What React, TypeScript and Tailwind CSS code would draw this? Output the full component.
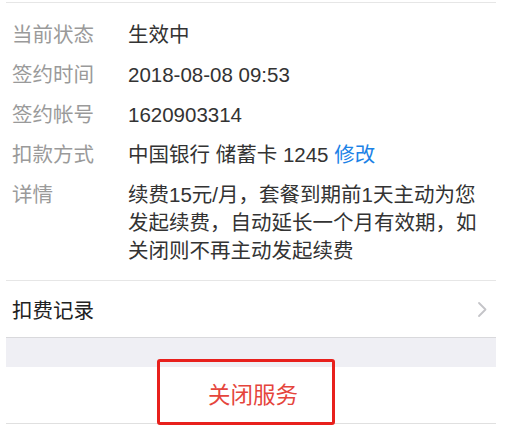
const rows: { label: string; value: React.ReactNode }[] = [
  { label: "当前状态", value: "生效中" },
  { label: "签约时间", value: "2018-08-08 09:53" },
  { label: "签约帐号", value: "1620903314" },
  {
    label: "扣款方式",
    value: (
      <>
        中国银行 储蓄卡 1245 <span className="text-[#1b82e6]">修改</span>
      </>
    ),
  },
  {
    label: "详情",
    value: "续费15元/月，套餐到期前1天主动为您发起续费，自动延长一个月有效期，如关闭则不再主动发起续费",
  },
];

const Chevron = () => (
  <svg width="11" height="17" viewBox="0 0 11 17" fill="none">
    <path d="M2 2L8.5 8.5L2 15" stroke="#c4c4c8" strokeWidth="1.8" strokeLinecap="round" strokeLinejoin="round" />
  </svg>
);

export default function App() {
  return (
    <div
      className="relative h-[431px] w-[519px] overflow-hidden bg-white"
      style={{ fontFamily: '"Liberation Sans", "Noto Sans CJK SC", sans-serif' }}
    >
      <div className="ml-[6px] mt-[2px] w-[490px] border-t border-[#e6e6e6]">
        {/* info list */}
        <div className="flex flex-col gap-[12px] px-[6px] pb-[15px] pt-[18px] text-[20.5px] leading-[28px]">
          {rows.map((r) => (
            <div key={r.label} className="flex">
              <div className="w-[116px] shrink-0 text-[#9a9a9a]">{r.label}</div>
              <div className="w-[360px] text-[#333333]">{r.value}</div>
            </div>
          ))}
        </div>

        {/* record row */}
        <div className="flex h-[57px] items-center justify-between border-t border-[#e6e6e6] pl-[6px] pr-[8px]">
          <span className="pt-[5px] text-[20.5px] text-[#222222]">扣费记录</span>
          <Chevron />
        </div>

        {/* gap band */}
        <div className="h-[30px] border-t border-[#d9d9dc] bg-[#efeff4]" />

        {/* close button */}
        <div className="flex h-[57px] items-center justify-center border-b border-[#e0e0e0]">
          <span className="pl-[4px] pt-[1px] text-[22.5px] text-[#e5453c]">关闭服务</span>
        </div>
      </div>

      {/* highlight mark */}
      <div className="absolute left-[157px] top-[359px] h-[66px] w-[178px] rounded-[3px] border-[3px] border-[#e8201c]" />
    </div>
  );
}
